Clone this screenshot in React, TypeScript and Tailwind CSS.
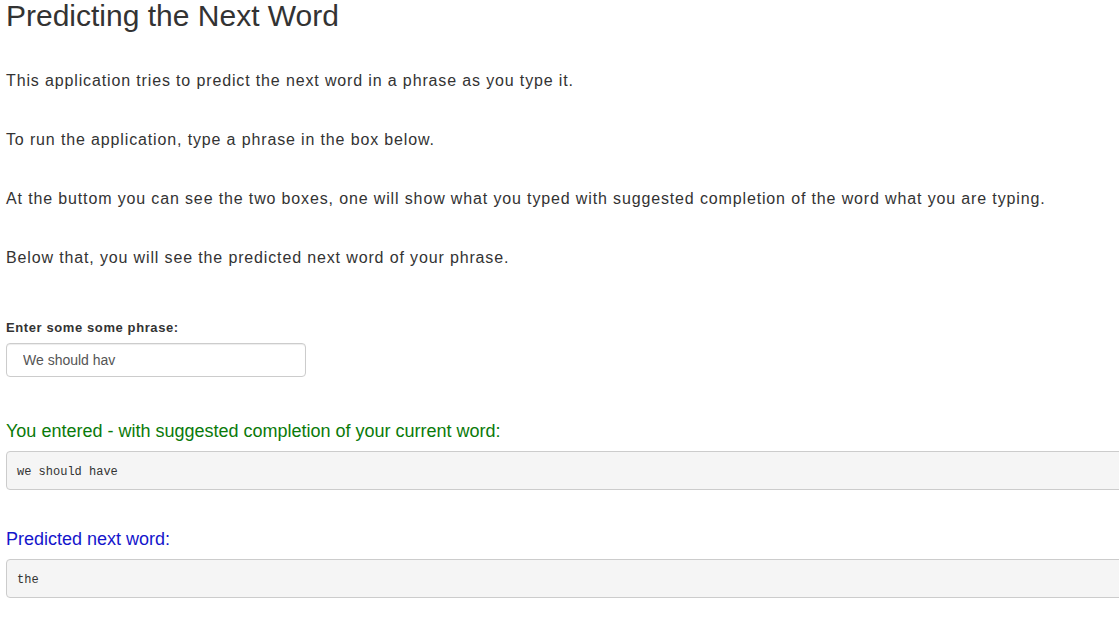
export default function App() {
  return (
    <div className="min-h-screen bg-white text-[#333] font-['Liberation_Sans',Arial,sans-serif] px-[6px] overflow-hidden">
      <h2 className="text-[30px] leading-[32px] mt-0 pt-0 text-[#333]">Predicting the Next Word</h2>
      <div className="text-[16px] leading-[22px] tracking-[0.86px] mt-[38px] flex flex-col gap-[37px]">
        <p>This application tries to predict the next word in a phrase as you type it.</p>
        <p>To run the application, type a phrase in the box below.</p>
        <p>At the buttom you can see the two boxes, one will show what you typed with suggested completion of the word what you are typing.</p>
        <p>Below that, you will see the predicted next word of your phrase.</p>
      </div>
      <div className="mt-[50px] flex flex-col">
        <label className="text-[13px] font-bold leading-[18px] tracking-[0.6px]">Enter some some phrase:</label>
        <input
          className="mt-[6px] w-[300px] h-[34px] border border-[#ccc] rounded-[4px] px-[16px] text-[14px] text-[#555] outline-none shadow-[inset_0_1px_1px_rgba(0,0,0,0.075)]"
          defaultValue="We should hav"
        />
      </div>
      <h4 className="mt-[43px] text-[18px] leading-[22px] text-[#0a7a0a]">You entered - with suggested completion of your current word:</h4>
      <pre className="mt-[9px] w-[1130px] h-[39px] border border-[#ccc] bg-[#f5f5f5] rounded-[4px] px-[10px] pt-[12px] pb-[8px] text-[12px] leading-[17px] font-['Liberation_Mono',monospace] text-[#333]">we should have</pre>
      <h4 className="mt-[38px] text-[18px] leading-[22px] text-[#1515cc]">Predicted next word:</h4>
      <pre className="mt-[9px] w-[1130px] h-[39px] border border-[#ccc] bg-[#f5f5f5] rounded-[4px] px-[10px] pt-[12px] pb-[8px] text-[12px] leading-[17px] font-['Liberation_Mono',monospace] text-[#333]">the</pre>
    </div>
  );
}
